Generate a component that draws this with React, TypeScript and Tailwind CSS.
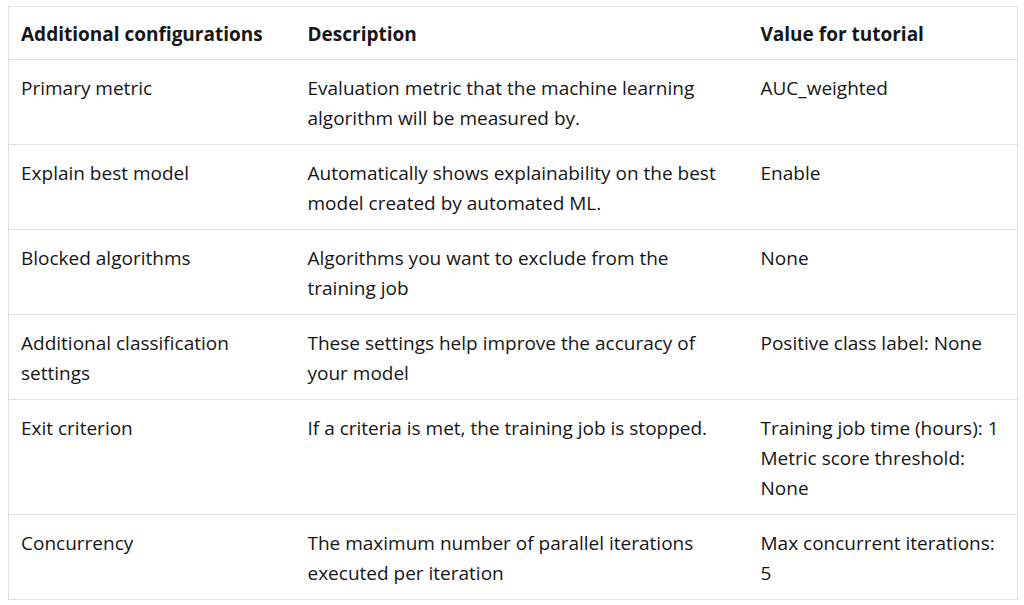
const ROWS: { name: string[]; desc: string[]; value: string[] }[] = [
  {
    name: ["Primary metric"],
    desc: ["Evaluation metric that the machine learning", "algorithm will be measured by."],
    value: ["AUC_weighted"],
  },
  {
    name: ["Explain best model"],
    desc: ["Automatically shows explainability on the best", "model created by automated ML."],
    value: ["Enable"],
  },
  {
    name: ["Blocked algorithms"],
    desc: ["Algorithms you want to exclude from the", "training job"],
    value: ["None"],
  },
  {
    name: ["Additional classification", "settings"],
    desc: ["These settings help improve the accuracy of", "your model"],
    value: ["Positive class label: None"],
  },
  {
    name: ["Exit criterion"],
    desc: ["If a criteria is met, the training job is stopped."],
    value: ["Training job time (hours): 1", "Metric score threshold:", "None"],
  },
  {
    name: ["Concurrency"],
    desc: ["The maximum number of parallel iterations", "executed per iteration"],
    value: ["Max concurrent iterations:", "5"],
  },
];

function Lines({ lines }: { lines: string[] }) {
  return (
    <>
      {lines.map((l, i) => (
        <div key={i} className="whitespace-nowrap">
          {l}
        </div>
      ))}
    </>
  );
}

export default function App() {
  return (
    <div
      className="w-[1024px] h-[605px] bg-white pl-2 pt-[6px] text-[#161616]"
      style={{ fontFamily: '"Open Sans", "Noto Sans", sans-serif' }}
    >
      <table className="w-[1010px] border-collapse border border-[#e1e1e1] text-[19px] leading-[30px]">
        <thead>
          <tr className="border-b border-[#e1e1e1]">
            <th className="w-[287px] px-[12px] pt-[12px] pb-[10px] text-left font-bold">Additional configurations</th>
            <th className="w-[453px] px-[12px] pt-[12px] pb-[10px] text-left font-bold">Description</th>
            <th className="px-[12px] pt-[12px] pb-[10px] text-left font-bold">Value for tutorial</th>
          </tr>
        </thead>
        <tbody>
          {ROWS.map((r, i) => (
            <tr key={i} className="border-b border-[#e1e1e1] align-top">
              <td className="px-[12px] pt-[13px] pb-[11px]">
                <Lines lines={r.name} />
              </td>
              <td className="px-[12px] pt-[13px] pb-[11px]">
                <Lines lines={r.desc} />
              </td>
              <td className="px-[12px] pt-[13px] pb-[11px]">
                <Lines lines={r.value} />
              </td>
            </tr>
          ))}
        </tbody>
      </table>
    </div>
  );
}
